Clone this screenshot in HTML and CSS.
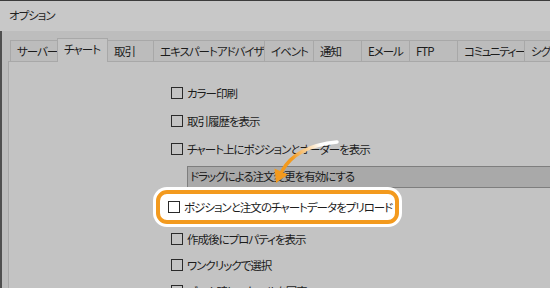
FILE: index.html
```html
<!DOCTYPE html>
<html lang="ja">
<head>
<meta charset="utf-8">
<title>オプション</title>
<link rel="stylesheet" href="styles.css">
</head>
<body>
<div class="window">
  <div class="titlebar">オプション</div>
  <div class="frame">
    <div class="edge"></div>
    <div class="dialog">
      <div class="tabs">
        <div class="tab">サーバー</div>
        <div class="tab active">チャート</div>
        <div class="tab">取引</div>
        <div class="tab">エキスパートアドバイザ</div>
        <div class="tab">イベント</div>
        <div class="tab">通知</div>
        <div class="tab">Eメール</div>
        <div class="tab">FTP</div>
        <div class="tab">コミュニティー</div>
        <div class="tab">シグナル</div>
      </div>
      <div class="panel">
        <div class="options">
          <div class="opt"><span class="cb"></span><span>カラー印刷</span></div>
          <div class="opt"><span class="cb"></span><span>取引履歴を表示</span></div>
          <div class="opt"><span class="cb"></span><span>チャート上にポジションとオーダーを表示</span></div>
          <div class="dragbar">ドラッグによる注文変更を有効にする</div>
          <div class="opt highlight"><span class="cb"></span><span>ポジションと注文のチャートデータをプリロード</span></div>
          <div class="opt short"><span class="cb"></span><span>作成後にプロパティを表示</span></div>
          <div class="opt short"><span class="cb"></span><span>ワンクリックで選択</span></div>
          <div class="opt short"><span class="cb"></span><span>ズーム時にスケールを固定</span></div>
        </div>
      </div>
    </div>
  </div>
  <svg class="arrow" width="550" height="288" viewBox="0 0 550 288">
    <defs>
      <linearGradient id="ag" gradientUnits="userSpaceOnUse" x1="337" y1="142" x2="282" y2="172">
        <stop offset="0" stop-color="#ffffff"/>
        <stop offset="0.25" stop-color="#ffffff"/>
        <stop offset="0.75" stop-color="#f39a1e"/>
        <stop offset="1" stop-color="#f39a1e"/>
      </linearGradient>
    </defs>
    <path d="M 337 142 Q 296 146 282 171" fill="none" stroke="url(#ag)" stroke-width="3.5" stroke-linecap="round"/>
    <polygon points="276,183 274.5,168.5 288,174.5" fill="#f39a1e"/>
  </svg>
</div>
</body>
</html>
```

FILE: styles.css
```css
* { box-sizing: border-box; }
html, body {
  margin: 0;
  padding: 0;
  width: 550px;
  height: 288px;
  overflow: hidden;
  background: #bdbdbd;
}
body {
  font-family: "Noto Sans CJK JP", "Noto Sans", sans-serif;
  font-feature-settings: "palt";
  font-size: 11.5px;
  letter-spacing: -1px;
  color: #1c1c1c;
}
.window {
  position: relative;
  width: 550px;
  height: 288px;
  overflow: hidden;
}
.titlebar {
  height: 31px;
  border-top: 1px solid #3c3c3c;
  background: #c8c8c8;
  padding-left: 9px;
  line-height: 29px;
  color: #222;
}
.frame {
  display: flex;
  height: 257px;
}
.edge {
  width: 2px;
  background: #4f4f4f;
  flex: none;
}
.dialog {
  flex: 1;
  display: flex;
  flex-direction: column;
  padding-left: 6px;
  padding-top: 7px;
  min-width: 0;
}
.tabs {
  display: flex;
  align-items: flex-end;
  height: 23px;
  margin-left: 2px;
  white-space: nowrap;
}
.tab {
  flex: none;
  height: 21px;
  border: 1px solid #a8a8a8;
  border-bottom: none;
  margin-left: -1px;
  background: #bcbcbc;
  padding-left: 6px;
  line-height: 20px;
  overflow: hidden;
  color: #1c1c1c;
}
.tab:first-child { margin-left: 0; }
.tab:nth-child(1) { width: 48px; }
.tab:nth-child(2) { width: 51px; }
.tab:nth-child(3) { width: 47px; }
.tab:nth-child(4) { width: 112px; }
.tab:nth-child(5) { width: 50px; }
.tab:nth-child(6) { width: 49px; }
.tab:nth-child(7) { width: 49px; }
.tab:nth-child(8) { width: 49px; }
.tab:nth-child(9) { width: 68px; letter-spacing: -1.4px; }
.tab:nth-child(10) { width: 60px; }
.tab.active {
  height: 24px;
  margin-bottom: -1px;
  background: #c3c3c3;
  position: relative;
  z-index: 1;
  line-height: 21px;
}
.panel {
  flex: 1;
  background: #c3c3c3;
  border-top: 1px solid #a8a8a8;
  border-left: 1px solid #a8a8a8;
  padding-left: 162px;
  padding-top: 17px;
}
.options {
  display: flex;
  flex-direction: column;
  align-items: flex-start;
}
.opt {
  display: flex;
  align-items: center;
  height: 28px;
  white-space: nowrap;
}
.opt.short { height: 26px; }
.cb {
  width: 12px;
  height: 12px;
  border: 1px solid #2a2a2a;
  margin-right: 4px;
  flex: none;
}
.dragbar {
  align-self: stretch;
  margin-top: 3px;
  margin-left: 16px;
  height: 22px;
  background: #a9a9a9;
  border: 1px solid #7e7e7e;
  border-right: none;
  padding-left: 2px;
  line-height: 19px;
  white-space: nowrap;
}
.opt.highlight {
  margin-top: 2px;
  margin-bottom: 2px;
  margin-left: -15px;
  width: 243px;
  height: 34px;
  padding-left: 8px;
  background: #ffffff;
  border: 4px solid #f39a1e;
  border-radius: 11px;
  box-shadow: 0 0 0 3px #ffffff;
  position: relative;
  z-index: 2;
}
.arrow {
  position: absolute;
  left: 0;
  top: 0;
  z-index: 5;
  pointer-events: none;
}
```
